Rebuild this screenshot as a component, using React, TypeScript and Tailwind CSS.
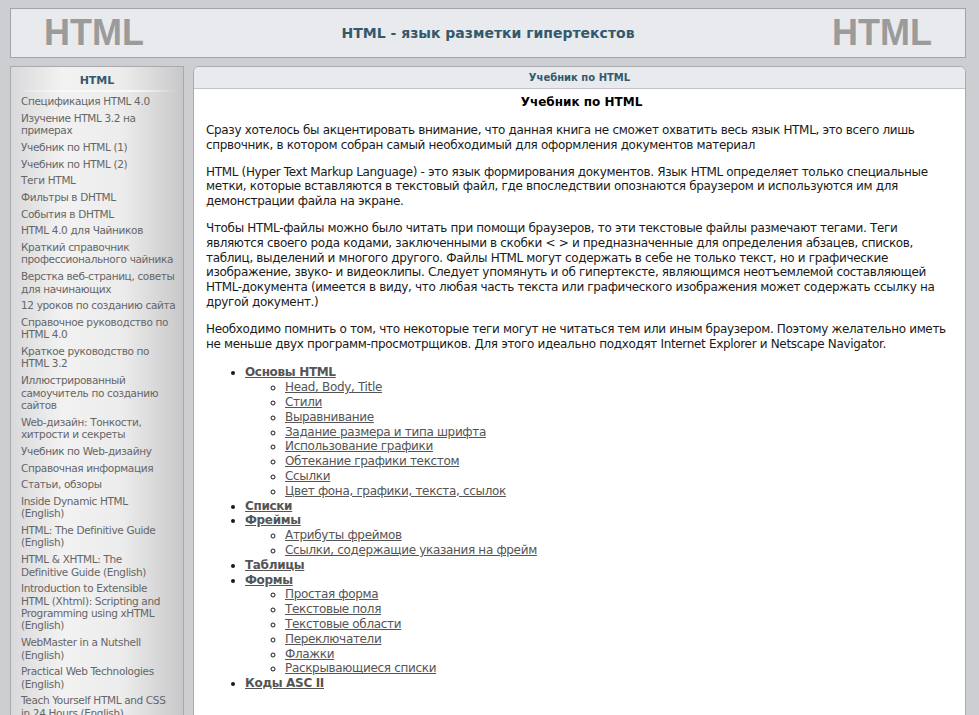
import React from "react";

const sideItems: string[][] = [
  ["Спецификация HTML 4.0"],
  ["Изучение HTML 3.2 на", "примерах"],
  ["Учебник по HTML (1)"],
  ["Учебник по HTML (2)"],
  ["Теги HTML"],
  ["Фильтры в DHTML"],
  ["События в DHTML"],
  ["HTML 4.0 для Чайников"],
  ["Краткий справочник", "профессионального чайника"],
  ["Верстка веб-страниц, советы", "для начинающих"],
  ["12 уроков по созданию сайта"],
  ["Справочное руководство по", "HTML 4.0"],
  ["Краткое руководство по", "HTML 3.2"],
  ["Иллюстрированный", "самоучитель по созданию", "сайтов"],
  ["Web-дизайн: Тонкости,", "хитрости и секреты"],
  ["Учебник по Web-дизайну"],
  ["Справочная информация"],
  ["Статьи, обзоры"],
  ["Inside Dynamic HTML", "(English)"],
  ["HTML: The Definitive Guide", "(English)"],
  ["HTML & XHTML: The", "Definitive Guide (English)"],
  ["Introduction to Extensible", "HTML (Xhtml): Scripting and", "Programming using xHTML", "(English)"],
  ["WebMaster in a Nutshell", "(English)"],
  ["Practical Web Technologies", "(English)"],
  ["Teach Yourself HTML and CSS", "in 24 Hours (English)"],
  ["HTML 4 for Dummies", "(English)"],
];

const toc: { title: string; sub?: string[] }[] = [
  {
    title: "Основы HTML",
    sub: [
      "Head, Body, Title",
      "Стили",
      "Выравнивание",
      "Задание размера и типа шрифта",
      "Использование графики",
      "Обтекание графики текстом",
      "Ссылки",
      "Цвет фона, графики, текста, ссылок",
    ],
  },
  { title: "Списки" },
  { title: "Фреймы", sub: ["Атрибуты фреймов", "Ссылки, содержащие указания на фрейм"] },
  { title: "Таблицы" },
  {
    title: "Формы",
    sub: [
      "Простая форма",
      "Текстовые поля",
      "Текстовые области",
      "Переключатели",
      "Флажки",
      "Раскрывающиеся списки",
    ],
  },
  { title: "Коды ASC II" },
];

export default function App() {
  return (
    <div className="min-h-screen h-[715px] overflow-hidden bg-[#cdced2] pl-[10px] pr-[13px] pt-[8px] font-['DejaVu_Sans',sans-serif]">
      <div className="flex h-[50px] items-center justify-between border border-[#a3a4a8] bg-[#e9eaee] px-[33px]">
        <span className="font-['Liberation_Sans',Arial,sans-serif] text-[36px] font-bold leading-none text-[#9b9b9b]">
          HTML
        </span>
        <span className="text-[14px] font-bold text-[#33596c]">HTML - язык разметки гипертекстов</span>
        <span className="font-['Liberation_Sans',Arial,sans-serif] text-[36px] font-bold leading-none text-[#9b9b9b]">
          HTML
        </span>
      </div>
      <div className="mt-[8px] flex gap-[9px]">
        <div className="w-[174px] shrink-0 border border-[#a9aaae] bg-[linear-gradient(to_right,#d9d9db_0%,#f2f2f2_30%,#ececec_65%,#c8c8ca_100%)] pb-4">
          <div className="mx-[6px] pt-[7px] pb-[3px] text-center text-[11px] font-bold leading-[13px] text-[#33596c]">
            HTML
          </div>
          <div className="mx-[6px] h-[2px] bg-[linear-gradient(to_right,transparent,#f9f9f9_30%,#f9f9f9_70%,transparent)]" />
          <div className="pl-[10px] pr-[2px] pt-[3px]">
            {sideItems.map((lines) => (
              <div key={lines.join(" ")} className="mb-[4.3px] text-[10.5px] leading-[12.4px] tracking-[-0.35px] text-[#666666]">
                {lines.map((l) => (
                  <div key={l} className="whitespace-nowrap">
                    {l}
                  </div>
                ))}
              </div>
            ))}
          </div>
        </div>
        <div className="flex-1 rounded-t-[6px] border border-[#a9aaae] bg-white">
          <div className="flex h-[22px] items-center justify-center rounded-t-[6px] border-b border-[#c3c4c8] bg-[#e9eaee] text-[10px] font-bold text-[#33596c]">
            Учебник по HTML
          </div>
          <div className="pl-[12px] pr-[8px] pt-[5px] text-[12px] leading-[14.8px] tracking-[-0.33px] text-[#1a1a1a]">
            <h1 className="text-center text-[12px] font-bold leading-[16px] tracking-normal text-black">Учебник по HTML</h1>
            <p className="mt-[13px]">
              Сразу хотелось бы акцентировать внимание, что данная книга не сможет охватить весь язык HTML, это всего лишь спрвочник, в котором собран самый необходимый для оформления документов материал
            </p>
            <p className="mt-[12px]">
              HTML (Hyper Text Markup Language) - это язык формирования документов. Язык HTML определяет только специальные метки, которые вставляются в текстовый файл, где впоследствии опознаются браузером и используются им для демонстрации файла на экране.
            </p>
            <p className="mt-[12px]">
              Чтобы HTML-файлы можно было читать при помощи браузеров, то эти текстовые файлы размечают тегами. Теги являются своего рода кодами, заключенными в скобки &lt; &gt; и предназначенные для определения абзацев, списков, таблиц, выделений и многого другого. Файлы HTML могут содержать в себе не только текст, но и графические изображение, звуко- и видеоклипы. Следует упомянуть и об гипертексте, являющимся неотъемлемой составляющей HTML-документа (имеется в виду, что любая часть текста или графического изображения может содержать ссылку на другой документ.)
            </p>
            <p className="mt-[12px]">
              Необходимо помнить о том, что некоторые теги могут не читаться тем или иным браузером. Поэтому желательно иметь не меньше двух программ-просмотрщиков. Для этого идеально подходят Internet Explorer и Netscape Navigator.
            </p>
            <ul className="mt-[14px] list-disc pl-[39px]">
              {toc.map((item) => (
                <li key={item.title}>
                  <a className="font-bold text-[#555555] underline">{item.title}</a>
                  {item.sub && (
                    <ul className="list-[circle] pl-[40px]">
                      {item.sub.map((s) => (
                        <li key={s}>
                          <a className="text-[#555555] underline">{s}</a>
                        </li>
                      ))}
                    </ul>
                  )}
                </li>
              ))}
            </ul>
          </div>
        </div>
      </div>
    </div>
  );
}
